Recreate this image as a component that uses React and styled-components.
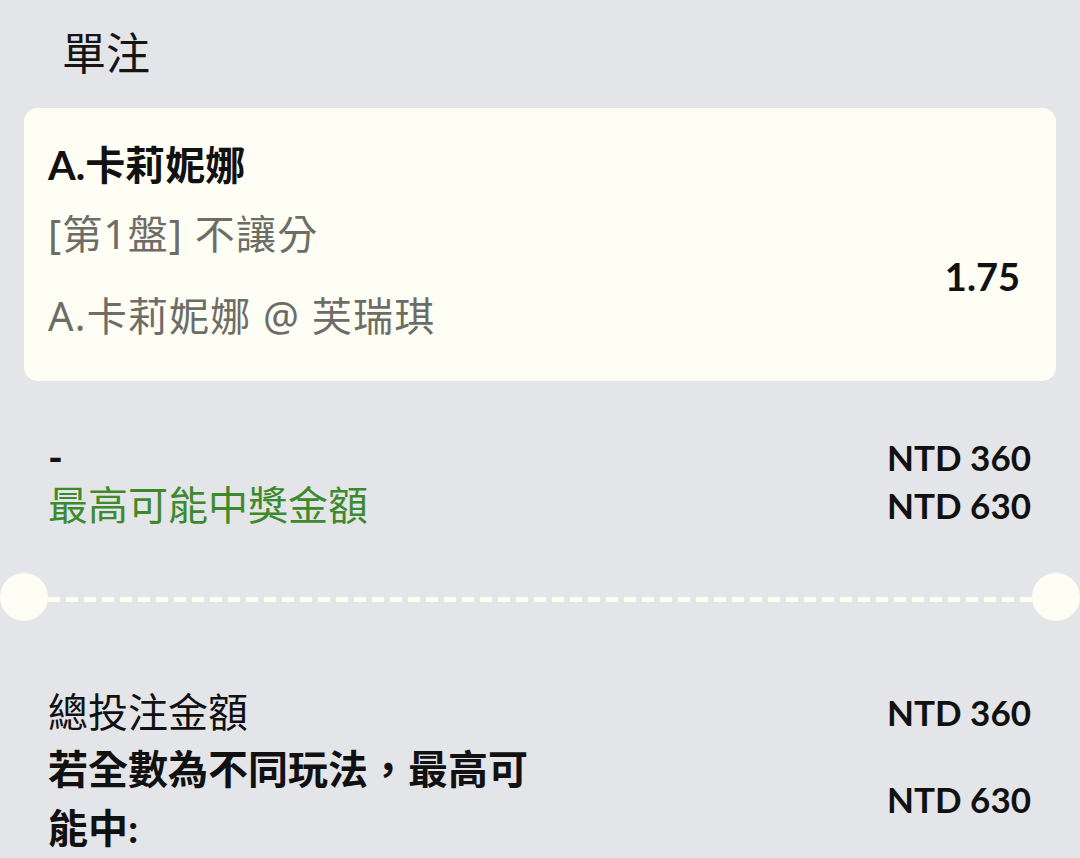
import React from "react";
import styled, { createGlobalStyle } from "styled-components";

const Global = createGlobalStyle`
  html, body { margin: 0; padding: 0; background: #e4e5e9; }
  body { font-family: Lato, "Noto Sans CJK TC", sans-serif; color: #111; }
  * { box-sizing: border-box; }
`;

const Page = styled.div`
  width: 1080px;
  min-height: 858px;
  background: #e4e5e9;
  overflow: hidden;
`;

const Title = styled.h1`
  margin: 0;
  padding: 26px 0 0 62px;
  height: 108px;
  font-size: 44px;
  line-height: 54px;
  font-weight: 400;
  color: #151515;
`;

const Card = styled.section`
  margin: 0 24px;
  height: 273px;
  background: #fffef5;
  border-radius: 14px;
  padding: 24px 36px 0 24px;
  display: flex;
  justify-content: space-between;
  align-items: flex-start;
`;

const CardInfo = styled.div`
  display: flex;
  flex-direction: column;
`;

const Line = styled.div`
  font-family: ${(p) => (p.$muted ? '"Noto Sans", "Noto Sans CJK TC", sans-serif' : 'Lato, "Noto Sans CJK TC", sans-serif')};
  font-size: 40px;
  line-height: ${(p) => p.$lh || 66}px;
  margin-top: ${(p) => p.$mt || 0}px;
  letter-spacing: ${(p) => (p.$muted ? "1.2px" : "0")};
  font-weight: ${(p) => (p.$bold ? 700 : 400)};
  color: ${(p) => (p.$muted ? "#6d6d68" : "#111")};
  white-space: nowrap;
`;

const Odds = styled.div`
  margin-top: 122px;
  font-size: 38px;
  line-height: 44px;
  font-weight: 700;
  color: #111;
`;

const Summary = styled.div`
  padding: 52px 49px 0 48px;
  display: flex;
  flex-direction: column;
`;

const Row = styled.div`
  display: flex;
  justify-content: space-between;
  align-items: center;
  min-height: ${(p) => p.$h || 48}px;
`;

const Label = styled.div`
  font-size: 40px;
  line-height: ${(p) => p.$lh || 48}px;
  font-weight: ${(p) => (p.$bold ? 700 : 400)};
  color: ${(p) => (p.$green ? "#3d8a2c" : "#111")};
  max-width: ${(p) => p.$maxw || "none"};
`;

const Amount = styled.div`
  font-size: 35px;
  line-height: 48px;
  font-weight: 700;
  color: #111;
  white-space: nowrap;
`;

const Divider = styled.div`
  margin-top: 44px;
  display: flex;
  align-items: center;
  height: 48px;
`;

const Notch = styled.div`
  width: 48px;
  height: 48px;
  border-radius: 50%;
  background: #fffef5;
  flex-shrink: 0;
`;

const Dash = styled.div`
  flex: 1;
  height: 5px;
  margin-top: 4px;
  background: repeating-linear-gradient(
    to right,
    #fffef5 0 12px,
    transparent 12px 18px
  );
`;

const Totals = styled.div`
  padding: 63px 49px 0 48px;
  display: flex;
  flex-direction: column;
`;

export default function App() {
  return (
    <Page>
      <Global />
      <Title>單注</Title>
      <Card>
        <CardInfo>
          <Line $bold>A.卡莉妮娜</Line>
          <Line $muted $lh={70} $mt={1}>[第1盤] 不讓分</Line>
          <Line $muted $lh={70} $mt={12}>A.卡莉妮娜 @ 芙瑞琪</Line>
        </CardInfo>
        <Odds>1.75</Odds>
      </Card>
      <Summary>
        <Row>
          <Label $bold>-</Label>
          <Amount>NTD 360</Amount>
        </Row>
        <Row>
          <Label $green>最高可能中獎金額</Label>
          <Amount>NTD 630</Amount>
        </Row>
      </Summary>
      <Divider>
        <Notch />
        <Dash />
        <Notch />
      </Divider>
      <Totals>
        <Row $h={56}>
          <Label $lh={56}>總投注金額</Label>
          <Amount>NTD 360</Amount>
        </Row>
        <Row $h={118}>
          <Label $bold $lh={59} $maxw="490px">若全數為不同玩法，最高可能中:</Label>
          <Amount>NTD 630</Amount>
        </Row>
      </Totals>
    </Page>
  );
}
